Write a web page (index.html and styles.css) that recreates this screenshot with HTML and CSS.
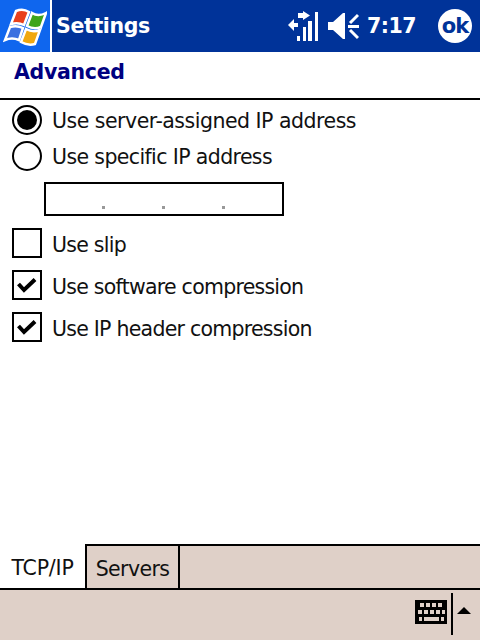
FILE: index.html
```html
<!DOCTYPE html>
<html lang="en">
<head>
<meta charset="utf-8">
<title>Settings</title>
<link rel="stylesheet" href="styles.css">
</head>
<body>
<div class="screen">
  <header class="titlebar">
    <div class="start">
      <svg width="44" height="38" viewBox="0 0 44 38">
        <path d="M13 3 Q20 0 26 4 L21 17 Q15 14 8 16 Z" fill="#e8401c" stroke="#fff" stroke-width="2.5"/>
        <path d="M29 5 Q35 9 43 5 L38 19 Q31 22 24 18 Z" fill="#3fa51c" stroke="#fff" stroke-width="2.5"/>
        <path d="M7 19 Q14 17 20 20 L16 32 Q9 29 2 32 Z" fill="#3a6fe0" stroke="#fff" stroke-width="2.5"/>
        <path d="M23 21 Q30 25 37 22 L32 36 Q25 38 18 34 Z" fill="#f0a810" stroke="#fff" stroke-width="2.5"/>
      </svg>
    </div>
    <div class="app-title">Settings</div>
    <div class="status">
      <svg class="signal" width="31" height="31" viewBox="0 0 31 31" fill="#fff">
        <path d="M0 14 L6 8 V20 Z"/><rect x="6" y="12" width="4" height="4"/>
        <path d="M10 2 H15 V0 L22 4.5 L15 9 V7 H10 Z"/>
        <rect x="9" y="25" width="3" height="5"/><rect x="15" y="16" width="3" height="14"/><rect x="20" y="10" width="4" height="20"/><rect x="27" y="1" width="3" height="29"/>
      </svg>
      <svg class="volume" width="31" height="27" viewBox="0 0 31 27" fill="#fff">
        <path d="M0 9 H5 L15 0 H17 V26 H15 L5 17 H0 Z"/>
        <path d="M30 2 L22 10 M20 13.500 H31 M22 17 L30 25" stroke="#fff" stroke-width="3" fill="none"/>
      </svg>
      <span class="clock">7:17</span>
    </div>
    <div class="ok">ok</div>
  </header>

  <div class="page-heading">Advanced</div>

  <main class="content">
    <label class="row row-radio">
      <span class="radio"><span class="radio-dot"></span></span>
      <span class="label label-wide">Use server-assigned IP address</span>
    </label>
    <label class="row row-radio row-radio-second">
      <span class="radio"></span>
      <span class="label label-mid">Use specific IP address</span>
    </label>
    <div class="ip-box">
      <span class="ip-dot"></span><span class="ip-dot"></span><span class="ip-dot"></span>
    </div>
    <label class="row row-check row-check-first">
      <span class="check"></span>
      <span class="label">Use slip</span>
    </label>
    <label class="row row-check">
      <span class="check">
        <svg width="26" height="26" viewBox="0 0 26 26"><path d="M4.500 12 L10 18 L21 7.500" fill="none" stroke="#000" stroke-width="4"/></svg>
      </span>
      <span class="label">Use software compression</span>
    </label>
    <label class="row row-check">
      <span class="check">
        <svg width="26" height="26" viewBox="0 0 26 26"><path d="M4.500 12 L10 18 L21 7.500" fill="none" stroke="#000" stroke-width="4"/></svg>
      </span>
      <span class="label">Use IP header compression</span>
    </label>
  </main>

  <nav class="tabs">
    <div class="tab tab-active">TCP/IP</div>
    <div class="tab tab-plain">Servers</div>
    <div class="tab-fill"></div>
  </nav>

  <footer class="menubar">
    <svg class="keyboard" width="32" height="24" viewBox="0 0 32 24">
      <rect width="32" height="24" fill="#000"/>
      <g fill="#dfd0c8">
        <rect x="5" y="3" width="4" height="4"/><rect x="11" y="3" width="4" height="4"/><rect x="17" y="3" width="4" height="4"/><rect x="23" y="3" width="4" height="4"/>
        <rect x="3" y="10" width="4" height="4"/><rect x="9" y="10" width="4" height="4"/><rect x="15" y="10" width="4" height="4"/><rect x="21" y="10" width="4" height="4"/><rect x="27" y="10" width="3" height="4"/>
        <rect x="4" y="17" width="3" height="4"/><rect x="9" y="17" width="15" height="4"/><rect x="26" y="17" width="3" height="4"/>
      </g>
    </svg>
    <div class="divider"></div>
    <div class="arrow"></div>
  </footer>
</div>
</body>
</html>
```

FILE: styles.css
```css
* { box-sizing: border-box; }
html, body { margin: 0; padding: 0; }
body { background: #fff; font-family: "DejaVu Sans", sans-serif; color: #000; }
.screen { width: 480px; height: 640px; display: flex; flex-direction: column; overflow: hidden; }

.titlebar { height: 52px; background: #003399; display: flex; align-items: center; color: #fff; flex: none; }
.start { width: 52px; height: 52px; background: #0f66ee; border-right: 2px solid #fff; display: flex; align-items: center; justify-content: center; padding-top: 2px; flex: none; }
.app-title { margin-left: 4px; font-size: 20.5px; font-weight: bold; letter-spacing: -0.35px; flex: 1; }
.status { display: flex; align-items: center; }
.signal { margin-right: 9px; }
.volume { margin-right: 8px; }
.clock { font-size: 20.5px; font-weight: bold; letter-spacing: -0.5px; width: 59px; }
.ok { width: 34px; height: 34px; border-radius: 50%; background: #fff; color: #003399; font-size: 21px; font-weight: bold; letter-spacing: -1px; display: flex; align-items: center; justify-content: center; margin: 0 8px 0 12px; }

.page-heading { height: 48px; border-bottom: 2px solid #000; padding: 6px 0 0 14px; font-size: 20.5px; font-weight: bold; letter-spacing: -0.3px; color: #000080; flex: none; line-height: 28px; }

.content { flex: 1; padding: 4px 0 0 12px; }
.row { display: flex; align-items: center; }
.row-radio { height: 32px; }
.row-radio-second { margin-top: 4px; }
.row-check { height: 32px; margin-top: 10px; }
.row-check-first { margin-top: 11px; }
.label { font-size: 20.5px; letter-spacing: -0.75px; margin: 2px 0 0 10px; color: #111; white-space: nowrap; }
.row-check .label { margin-top: 4px; }
.label-wide { letter-spacing: -0.5px; }
.label-mid { letter-spacing: -0.62px; }
.radio { width: 30px; height: 30px; border: 2px solid #000; border-radius: 50%; display: flex; align-items: center; justify-content: center; flex: none; }
.radio-dot { width: 20px; height: 20px; background: #000; border-radius: 50%; }
.check { width: 30px; height: 30px; border: 2px solid #000; display: flex; flex: none; }

.ip-box { width: 240px; height: 34px; margin: 10px 0 0 32px; border: 2px solid #000; display: flex; padding: 22px 0 0 56px; gap: 57px; }
.ip-dot { width: 3px; height: 3px; background: #999; flex: none; }

.tabs { height: 46px; display: flex; flex: none; border-top: 2px solid #000; background: #dfd0c8; font-size: 20.5px; letter-spacing: -0.75px; }
.tab { display: flex; align-items: center; justify-content: center; color: #111; padding-top: 3px; }
.tab-active { width: 85px; background: #fff; margin-top: -2px; border-bottom: 2px solid #000; letter-spacing: -0.2px; }
.tab-plain { width: 95px; border-left: 2px solid #000; border-right: 2px solid #000; border-bottom: 2px solid #000; letter-spacing: -0.6px; }
.tab-fill { flex: 1; border-bottom: 2px solid #000; }

.menubar { height: 50px; background: #dfd0c8; display: flex; align-items: flex-start; flex: none; justify-content: flex-end; }
.keyboard { margin: 10px 4px 0 0; }
.divider { width: 2px; height: 42px; margin-top: 3px; background: #000; }
.arrow { width: 0; height: 0; border-left: 7.5px solid transparent; border-right: 7.5px solid transparent; border-bottom: 7px solid #000; margin: 17px 9px 0 4px; }
```
